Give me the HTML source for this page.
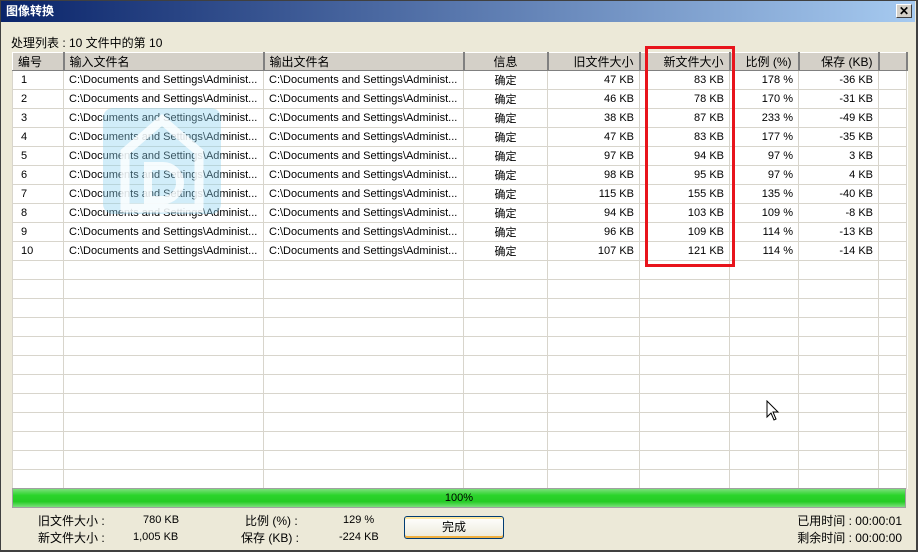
<!DOCTYPE html><html><head><meta charset="utf-8"><style>
*{margin:0;padding:0;box-sizing:border-box}
body{width:918px;height:552px;background:#ece9d8;font-family:"Liberation Sans","Noto Sans CJK SC",sans-serif;font-size:11px;color:#000;position:relative;overflow:hidden}
.win{position:absolute;left:0;top:0;width:918px;height:552px;border:1px solid #404040;border-right:2px solid #404040;border-bottom:2px solid #404040}
.title{position:absolute;left:1px;top:1px;width:914px;height:21px;background:linear-gradient(90deg,#0a246a,#a6caf0);color:#fff;font-weight:bold;font-size:12px;line-height:21px;padding-left:5px}
.close{position:absolute;left:896px;top:4px;width:16px;height:14px;background:#d4d0c8;border:1px solid;border-color:#fff #404040 #404040 #fff;font-size:12px;line-height:12px;text-align:center;font-weight:bold;color:#000}
.lbl{position:absolute;white-space:nowrap}
table{position:absolute;left:12px;top:52px;border-collapse:collapse;table-layout:fixed;background:#fff;border:1px solid #808080}
td{height:19px;border:1px solid #d8d5cc;white-space:nowrap;overflow:hidden;padding:0 5px;font-size:11px}
th{height:17px;background:#d4d0c8;font-weight:normal;border-top:1px solid #fff;border-left:1px solid #fff;border-right:2px solid #808080;border-bottom:1px solid #808080;font-size:12px;padding:0 5px;white-space:nowrap}
.r{text-align:right}.c{text-align:center}.l{text-align:left}
.wm{position:absolute;left:103px;top:108px;width:118px;height:106px;background:rgba(140,210,240,.4);border-radius:10px}
.red{position:absolute;left:645px;top:46px;width:90px;height:221px;border:3px solid #e8141c}
.prog{position:absolute;left:12px;top:488px;width:894px;height:20px;border:1px solid #a0a0a0;background:linear-gradient(#7be07b,#2bd42b 35%,#25cc25 70%,#7be07b);text-align:center;font-size:11px;line-height:18px}
.btn{position:absolute;left:404px;top:516px;width:100px;height:23px;border:1px solid #003c74;border-radius:3px;background:linear-gradient(#fff,#ece9d8);box-shadow:inset 0 -2px 0 #f0b040,inset 0 2px 0 #ffe8a0;text-align:center;line-height:21px;font-size:12px}
</style></head><body>
<div class="win"></div>
<div class="title">图像转换</div>
<div class="close">✕</div>
<div class="lbl" style="left:11px;top:34px;font-size:12px">处理列表 : 10 文件中的第 10</div>
<table>
<colgroup><col style="width:51px"><col style="width:200px"><col style="width:200px"><col style="width:84px"><col style="width:92px"><col style="width:90px"><col style="width:69px"><col style="width:80px"><col style="width:28px"></colgroup>
<tr><th class="l">编号</th><th class="l">输入文件名</th><th class="l">输出文件名</th><th class="c">信息</th><th class="r">旧文件大小</th><th class="r">新文件大小</th><th class="l" style="padding-left:15px">比例 (%)</th><th class="r">保存 (KB)</th><th></th></tr>
<tr><td>&nbsp;1</td><td>C:\Documents and Settings\Administ...</td><td>C:\Documents and Settings\Administ...</td><td class="c">确定</td><td class="r">47 KB</td><td class="r">83 KB</td><td class="r">178 %</td><td class="r">-36 KB</td><td></td></tr>
<tr><td>&nbsp;2</td><td>C:\Documents and Settings\Administ...</td><td>C:\Documents and Settings\Administ...</td><td class="c">确定</td><td class="r">46 KB</td><td class="r">78 KB</td><td class="r">170 %</td><td class="r">-31 KB</td><td></td></tr>
<tr><td>&nbsp;3</td><td>C:\Documents and Settings\Administ...</td><td>C:\Documents and Settings\Administ...</td><td class="c">确定</td><td class="r">38 KB</td><td class="r">87 KB</td><td class="r">233 %</td><td class="r">-49 KB</td><td></td></tr>
<tr><td>&nbsp;4</td><td>C:\Documents and Settings\Administ...</td><td>C:\Documents and Settings\Administ...</td><td class="c">确定</td><td class="r">47 KB</td><td class="r">83 KB</td><td class="r">177 %</td><td class="r">-35 KB</td><td></td></tr>
<tr><td>&nbsp;5</td><td>C:\Documents and Settings\Administ...</td><td>C:\Documents and Settings\Administ...</td><td class="c">确定</td><td class="r">97 KB</td><td class="r">94 KB</td><td class="r">97 %</td><td class="r">3 KB</td><td></td></tr>
<tr><td>&nbsp;6</td><td>C:\Documents and Settings\Administ...</td><td>C:\Documents and Settings\Administ...</td><td class="c">确定</td><td class="r">98 KB</td><td class="r">95 KB</td><td class="r">97 %</td><td class="r">4 KB</td><td></td></tr>
<tr><td>&nbsp;7</td><td>C:\Documents and Settings\Administ...</td><td>C:\Documents and Settings\Administ...</td><td class="c">确定</td><td class="r">115 KB</td><td class="r">155 KB</td><td class="r">135 %</td><td class="r">-40 KB</td><td></td></tr>
<tr><td>&nbsp;8</td><td>C:\Documents and Settings\Administ...</td><td>C:\Documents and Settings\Administ...</td><td class="c">确定</td><td class="r">94 KB</td><td class="r">103 KB</td><td class="r">109 %</td><td class="r">-8 KB</td><td></td></tr>
<tr><td>&nbsp;9</td><td>C:\Documents and Settings\Administ...</td><td>C:\Documents and Settings\Administ...</td><td class="c">确定</td><td class="r">96 KB</td><td class="r">109 KB</td><td class="r">114 %</td><td class="r">-13 KB</td><td></td></tr>
<tr><td>&nbsp;10</td><td>C:\Documents and Settings\Administ...</td><td>C:\Documents and Settings\Administ...</td><td class="c">确定</td><td class="r">107 KB</td><td class="r">121 KB</td><td class="r">114 %</td><td class="r">-14 KB</td><td></td></tr>
<tr><td></td><td></td><td></td><td></td><td></td><td></td><td></td><td></td><td></td></tr>
<tr><td></td><td></td><td></td><td></td><td></td><td></td><td></td><td></td><td></td></tr>
<tr><td></td><td></td><td></td><td></td><td></td><td></td><td></td><td></td><td></td></tr>
<tr><td></td><td></td><td></td><td></td><td></td><td></td><td></td><td></td><td></td></tr>
<tr><td></td><td></td><td></td><td></td><td></td><td></td><td></td><td></td><td></td></tr>
<tr><td></td><td></td><td></td><td></td><td></td><td></td><td></td><td></td><td></td></tr>
<tr><td></td><td></td><td></td><td></td><td></td><td></td><td></td><td></td><td></td></tr>
<tr><td></td><td></td><td></td><td></td><td></td><td></td><td></td><td></td><td></td></tr>
<tr><td></td><td></td><td></td><td></td><td></td><td></td><td></td><td></td><td></td></tr>
<tr><td></td><td></td><td></td><td></td><td></td><td></td><td></td><td></td><td></td></tr>
<tr><td></td><td></td><td></td><td></td><td></td><td></td><td></td><td></td><td></td></tr>
<tr><td style="height:12px"></td><td></td><td></td><td></td><td></td><td></td><td></td><td></td><td></td></tr>
</table>
<div class="wm"><svg width="118" height="106" viewBox="0 0 118 106"><path d="M22 100 V44 L59 12 L96 44 V100 Z" fill="none" stroke="rgba(255,255,255,.8)" stroke-width="9"/><path d="M45 58 H60 A16 16 0 0 1 60 92 H45 Z" fill="none" stroke="rgba(255,255,255,.8)" stroke-width="8"/></svg></div>
<div class="red"></div>
<svg style="position:absolute;left:766px;top:400px" width="14" height="22" viewBox="0 0 14 22"><path d="M1 1 V17 L5 13 L8 20 L10 19 L7 12 H12 Z" fill="#fff" stroke="#000" stroke-width="1"/></svg>
<div class="prog">100%</div>
<div class="lbl" style="left:38px;top:512px;font-size:12px">旧文件大小 :</div>
<div class="lbl" style="left:38px;top:529px;font-size:12px">新文件大小 :</div>
<div class="lbl" style="left:143px;top:514px">780 KB</div>
<div class="lbl" style="left:133px;top:531px">1,005 KB</div>
<div class="lbl" style="left:245px;top:512px;font-size:12px">比例 (%) :</div>
<div class="lbl" style="left:241px;top:529px;font-size:12px">保存 (KB) :</div>
<div class="lbl" style="left:343px;top:514px">129 %</div>
<div class="lbl" style="left:339px;top:531px">-224 KB</div>
<div class="btn">完成</div>
<div class="lbl" style="right:16px;top:512px;font-size:12px">已用时间 : 00:00:01</div>
<div class="lbl" style="right:16px;top:529px;font-size:12px">剩余时间 : 00:00:00</div>
</body></html>
